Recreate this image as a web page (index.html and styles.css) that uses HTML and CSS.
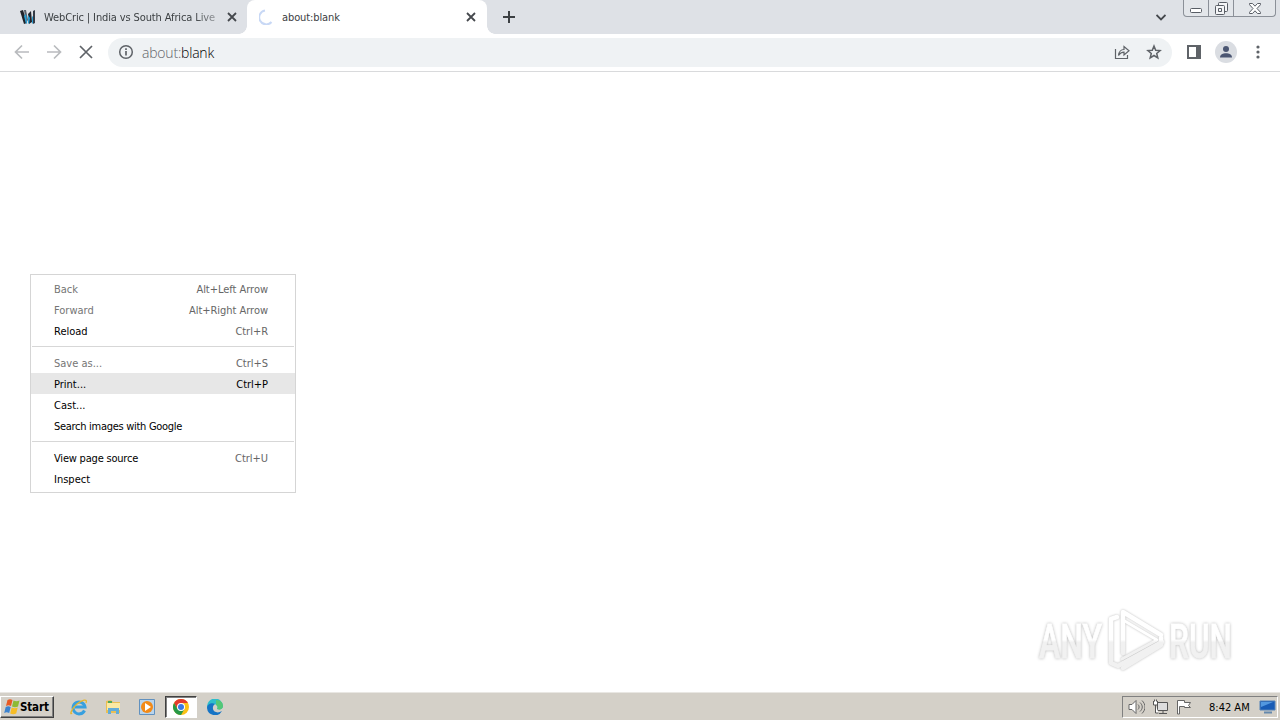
FILE: index.html
```
<!DOCTYPE html>
<html lang="en">

<head>
	<meta charset="UTF-8" />
	<title>about:blank</title>
	<link rel="stylesheet" href="styles.css">
</head>

<body>
	<div class="tabstrip">
		<div class="tab">
			<svg class="favicon" width="16" height="16" viewBox="0 0 16 16">
				<path d="M0 2l3-1 4 13-3 1z" fill="#20242b" />
				<path d="M4 1h2l2 10-2 3z" fill="#59616b" />
				<path d="M8 5l3-3 1 11-3 2z" fill="#20242b" />
				<path d="M13 2l2-1v13l-2 1z" fill="#343b46" />
				<path d="M4 7l2-2 1 9-1 1zM8 6l2 3-1 6-1-1zM12 8l1-1v7l-1 1z" fill="#2b9fd3" />
			</svg>
			<span class="title faded">WebCric | India vs South Africa Live</span>
			<svg class="close" width="10" height="10" viewBox="0 0 10 10"><path d="M1 1l8 8M9 1l-8 8" /></svg>
		</div>
		<div class="tab active">
			<svg class="favicon" width="16" height="16" viewBox="0 0 16 16"><path d="M6 1.500a7 7 0 1 0 6.500 11.500" fill="none" stroke="#c8d8f5" stroke-width="2" /></svg>
			<span class="title blank-title">about:blank</span>
			<svg class="close" width="10" height="10" viewBox="0 0 10 10"><path d="M1 1l8 8M9 1l-8 8" /></svg>
		</div>
		<svg class="new-tab" width="12" height="12" viewBox="0 0 12 12"><path d="M6 0v12M0 6h12" stroke="#3c4043" stroke-width="2" /></svg>
		<svg class="chevron" width="10" height="7" viewBox="0 0 10 7"><path d="M.5 1L5 5.500 9.500 1" fill="none" stroke="#45484d" stroke-width="1.800" /></svg>
		<div class="window-buttons">
			<span class="min"><svg width="12" height="5" viewBox="0 0 12 5"><rect x=".5" y=".5" width="11" height="4" rx="1" fill="#fff" stroke="#585d65" /></svg></span>
			<span class="max"><svg width="13" height="13" viewBox="0 0 13 13" fill="#f4f5f7" stroke="#585d65"><rect x="3.500" y=".5" width="9" height="9" rx="1" /><rect x=".5" y="3.500" width="9" height="9" rx="1" /><path d="M3.500 6.500h3v3h-3z" /></svg></span>
			<span class="exit"><svg width="12" height="11" viewBox="0 0 12 11"><path d="M.5.5h3L6 3.200 8.500.5h3v1.200L8 5.500l3.500 3.800v1.200h-3L6 7.800 3.500 10.500h-3V9.300L4 5.500.5 1.700z" fill="#fff" stroke="#585d65" /></svg></span>
		</div>
	</div>

	<div class="toolbar">
		<svg class="nav" width="16" height="16" viewBox="0 0 16 16" stroke="#b9bbbe"><path d="M15 8H2M8 1.500L1.500 8 8 14.500" /></svg>
		<svg class="nav" width="16" height="16" viewBox="0 0 16 16" stroke="#b9bbbe"><path d="M1 8h13M8 1.500L14.500 8 8 14.500" /></svg>
		<svg class="nav" width="16" height="16" viewBox="0 0 16 16" stroke="#5f6368"><path d="M2 2l12 12M14 2L2 14" /></svg>
		<div class="omnibox">
			<svg width="16" height="16" viewBox="0 0 16 16"><circle cx="8" cy="8" r="6.300" fill="none" stroke="#5f6368" stroke-width="1.500" /><path d="M8 7v4.500M8 4.300v1.700" stroke="#5f6368" stroke-width="1.700" /></svg>
			<span class="url"><span>about:</span>blank</span>
			<svg class="share" width="16" height="16" viewBox="0 0 16 16" fill="none" stroke="#5f6368" stroke-width="1.200"><path d="M1.500 5v9.500h12V11" /><path d="M4.500 11.500C5 7.500 7 5.500 10 5.500V2.500l5 4.300-5 4.200V8.200c-2.500 0-4 .8-5.500 3.300z" /></svg>
			<svg class="star" width="16" height="16" viewBox="0 0 16 16"><path d="M8 2l1.700 4.200 4.400.4-3.400 2.900 1.100 4.400L8 11.500l-3.800 2.400 1.100-4.400-3.400-2.900 4.400-.4z" fill="none" stroke="#5f6368" stroke-width="1.500" /></svg>
		</div>
		<svg class="panel" width="14" height="14" viewBox="0 0 14 14"><path d="M1 1h12v12H1z" fill="#fff" stroke="#5f6368" stroke-width="2" /><path d="M9 1h4v12H9z" fill="#5f6368" /></svg>
		<svg class="avatar" width="22" height="22" viewBox="0 0 22 22"><circle cx="11" cy="11" r="11" fill="#dadde2" /><circle cx="11" cy="8" r="3" fill="#4b5672" /><path d="M5 16.500c0-3 3-4.300 6-4.300s6 1.300 6 4.300z" fill="#4b5672" /></svg>
		<svg class="more" width="4" height="14" viewBox="0 0 4 14" fill="#5f6368"><circle cx="2" cy="2" r="1.600" /><circle cx="2" cy="7" r="1.600" /><circle cx="2" cy="12" r="1.600" /></svg>
	</div>

	<div class="page">
		<div class="context-menu">
			<div class="item disabled"><span>Back</span><kbd>Alt+Left Arrow</kbd></div>
			<div class="item disabled"><span>Forward</span><kbd>Alt+Right Arrow</kbd></div>
			<div class="item"><span>Reload</span><kbd>Ctrl+R</kbd></div>
			<hr />
			<div class="item disabled"><span>Save as...</span><kbd>Ctrl+S</kbd></div>
			<div class="item hover"><span>Print...</span><kbd>Ctrl+P</kbd></div>
			<div class="item"><span>Cast...</span></div>
			<div class="item"><span class="tight">Search images with Google</span></div>
			<hr />
			<div class="item"><span class="source">View page source</span><kbd>Ctrl+U</kbd></div>
			<div class="item"><span>Inspect</span></div>
		</div>

		<svg class="watermark" width="200" height="68" viewBox="0 0 200 68">
			<defs>
				<linearGradient id="fade" gradientUnits="userSpaceOnUse" x1="0" y1="0" x2="0" y2="68">
					<stop offset=".48" stop-color="#fff" />
					<stop offset=".52" stop-color="#f1f1f1" />
				</linearGradient>
			</defs>
			<g class="watermark-text" fill="url(#fade)" stroke="url(#fade)" stroke-width=".8">
				<text x="2" y="51" textLength="63" lengthAdjust="spacingAndGlyphs">ANY</text>
				<text x="132" y="51" textLength="63" lengthAdjust="spacingAndGlyphs">RUN</text>
			</g>
			<g class="watermark-logo" fill="none" stroke="url(#fade)" stroke-width="4.500" stroke-linecap="round" stroke-linejoin="round">
				<path d="M80 10l-6 2v44l7 3 44-24" />
				<path d="M86 46V5l38 23" />
				<path d="M86 13l34 20-35 19" stroke-width="3" />
				<path d="M86 61l38-23v-7" />
			</g>
		</svg>
	</div>

	<div class="taskbar">
		<div class="start">
			<svg width="16" height="16" viewBox="0 0 16 16"><path d="M3.500 1c2-1 3-1 5 0L7 7c-2-1-3-1-5 0z" fill="#e85a24" /><path d="M9.500 1.500c2 1 4 1 6 0L14 7.500c-2 1-4 1-6 0z" fill="#8dba35" /><path d="M1.700 8c2-1 3-1 5 0L5.200 14c-2-1-3-1-5 0z" fill="#3c83cf" /><path d="M7.700 8.500c2 1 4 1 6 0L12.200 14.500c-2 1-4 1-6 0z" fill="#f7bd26" /></svg>
			<span>Start</span>
		</div>
		<div class="task">
			<svg width="18" height="18" viewBox="0 0 18 18" fill="none"><path d="M14.500 12.500A6 6 0 1 1 15 9H5" stroke="#38a0df" stroke-width="3" /><path d="M2 15c-3 3 0-5 5-9s11-6 9-1" stroke="#e6b62d" stroke-width="1.300" /></svg>
		</div>
		<div class="task">
			<svg width="17" height="16" viewBox="0 0 17 16"><path d="M1 2l5-1 2 2h7v11H1z" fill="#e9bf54" /><path d="M2 4h13v7H2z" fill="#fae9a3" /><path d="M3 15V9h11v6h-3v-3H6v3z" fill="#62acd8" /><path d="M3 3h4" stroke="#4ea75c" stroke-width="2" /></svg>
		</div>
		<div class="task">
			<svg width="16" height="16" viewBox="0 0 16 16"><path d="M.5.5h15v15H.5z" fill="#b9d4ec" stroke="#6191bf" /><circle cx="8" cy="8" r="6" fill="#f28a18" /><path d="M6 4l6 4-6 4z" fill="#fff" /></svg>
		</div>
		<div class="task pressed">
			<svg width="16" height="16" viewBox="0 0 16 16"><circle cx="8" cy="8" r="8" fill="#fbc116" /><path d="M1.070 4A8 8 0 0 1 14.930 4H8L4.500 10z" fill="#e33b2e" /><path d="M1.070 4A8 8 0 0 0 8 16l3.500-6-7 0z" fill="#279847" /><circle cx="8" cy="8" r="4" fill="#fff" /><circle cx="8" cy="8" r="3" fill="#3979e4" /></svg>
		</div>
		<div class="task">
			<svg width="17" height="16" viewBox="0 0 17 16"><path d="M0 8a8 8 0 0 1 16-1c0 3-3 4-6 3 2-4-2-6-5-4z" fill="#2fbecb" /><path d="M9 1c5 0 7 3 7 6s-3 4-6 3c1-1 1-3-1-4z" fill="#54c776" /><path d="M0 9c0-4 5-6 8-4-3 2-3 7 1 8 2 1 4 0 6-1a8 8 0 0 1-15-3z" fill="#1674c5" /></svg>
		</div>
		<div class="tray">
			<svg width="17" height="16" viewBox="0 0 17 16" fill="none" stroke="#666"><path d="M1 5.500h3l4-4v13l-4-4H1z" fill="#fff" /><path d="M10 5.500c1.500 1.500 1.500 3.500 0 5M12 3.500c3 3 3 6 0 9M14 1.500c4 4 4 9 0 13" /></svg>
			<svg width="17" height="16" viewBox="0 0 17 16" fill="none" stroke="#555"><path d="M5.500 3.500h10v8h-10z" fill="#ddd" /><path d="M7 14.500h8M11 12v2" /><path d="M1.500 2v4h4V2M2.500.5v2M4.500.5v2M3.500 6v8h3" fill="#fff" /></svg>
			<svg width="16" height="16" viewBox="0 0 16 16" fill="#fff" stroke="#666"><path d="M1.500 15V1.500h7v2h6l-2 3 2 2h-6v-1h-5V15z" /></svg>
			<span class="clock">8:42 AM</span>
			<svg class="screen" width="17" height="14" viewBox="0 0 17 14"><path d="M1 1h15v9H1z" fill="#185bb5" stroke="#5382b8" /><path d="M2 2h12L2 7z" fill="#5297df" /><path d="M5 12.500h8" stroke="#6589ad" stroke-width="2" /></svg>
		</div>
	</div>
</body>

</html>
```
FILE: styles.css
```
* {
	box-sizing: border-box;
}

body {
	margin: 0;
	width: 1280px;
	height: 720px;
	display: flex;
	flex-direction: column;
	overflow: hidden;
	background: #fff;
	font-family: "DejaVu Sans Condensed", "DejaVu Sans", sans-serif;
	font-stretch: condensed;
	font-size: 11px;
	color: #000;
}

svg {
	display: block;
	flex: none;
}

.tabstrip {
	display: flex;
	align-items: center;
	height: 34px;
	background: #dee1e6;
	flex: none;
}

.tab {
	display: flex;
	align-items: center;
	width: 247px;
	height: 34px;
	padding: 0 10px 0 20px;
	color: #3c4043;
}

.tab.active {
	position: relative;
	width: 240px;
	padding: 0 11px 0 12px;
	background: #fff;
	border-radius: 8px 8px 0 0;
}

/* curved feet on both sides of the selected tab */
.tab.active::before,
.tab.active::after {
	content: "";
	position: absolute;
	bottom: 0;
	width: 8px;
	height: 8px;
}

.tab.active::before {
	left: -8px;
	background: radial-gradient(circle at 0 0, #dee1e6 7.5px, #fff 8px);
}

.tab.active::after {
	right: -8px;
	background: radial-gradient(circle at 100% 0, #dee1e6 7.5px, #fff 8px);
}

.title {
	margin-left: 8px;
	white-space: nowrap;
	letter-spacing: -0.12px;
}

.faded {
	width: 173px;
	overflow: hidden;
	-webkit-mask-image: linear-gradient(to right, #000 150px, rgba(0, 0, 0, 0.4) 173px);
}

.blank-title {
	margin-left: 7px;
	letter-spacing: -0.1px;
}

.close {
	margin-left: auto;
	stroke: #45484d;
	stroke-width: 1.8;
}

.new-tab {
	margin-left: 16px;
}

.chevron {
	margin-left: auto;
	margin-right: 17px;
}

.window-buttons {
	display: flex;
	align-self: flex-start;
	width: 93px;
	height: 17px;
	margin-right: 4px;
	border: 1px solid #8b9098;
	border-top: 0;
	border-radius: 0 0 4px 4px;
	background: #e3e6ea;
}

.window-buttons span {
	display: flex;
	justify-content: center;
	align-items: center;
	width: 25px;
	border-right: 1px solid #8b9098;
}

.window-buttons .min {
	padding-top: 5px;
}

.window-buttons .exit {
	width: 41px;
	border: 0;
}

.toolbar {
	display: flex;
	align-items: center;
	height: 38px;
	padding: 0 20px 1px 14px;
	border-bottom: 1px solid #d9dadc;
	flex: none;
}

.nav {
	margin-right: 16px;
	fill: none;
	stroke-width: 1.7;
}

.omnibox {
	display: flex;
	align-items: center;
	width: 1064px;
	height: 29px;
	margin-left: -2px;
	padding: 0 10px;
	border-radius: 15px;
	background: #eff2f4;
}

.url {
	margin-left: 8px;
	font-family: "Open Sans", sans-serif;
	font-size: 14px;
	font-weight: 300;
	font-stretch: normal;
	letter-spacing: -0.2px;
}

.url span {
	color: #5f6368;
}

.share {
	margin-left: auto;
}

.star {
	margin-left: 16px;
}

.panel {
	margin-left: 15px;
}

.avatar {
	margin-left: 14px;
}

.more {
	margin-left: auto;
}

.page {
	position: relative;
	flex: 1;
}

.context-menu {
	position: absolute;
	left: 30px;
	top: 202px;
	width: 266px;
	height: 219px;
	padding: 3px 0;
	border: 1px solid #d5d5d5;
	background: #fff;
}

.item {
	display: flex;
	justify-content: space-between;
	height: 21px;
	padding: 0 27px 0 23px;
	line-height: 23px;
}

.item kbd {
	font-family: inherit;
	letter-spacing: -0.03px;
	color: #666;
}

.item .tight {
	letter-spacing: -0.29px;
}

.item .source {
	letter-spacing: -0.2px;
}

.disabled {
	color: #757575;
}

.hover {
	background: #e7e7e7;
}

.item.hover kbd {
	color: #000;
}

.context-menu hr {
	height: 1px;
	margin: 5px 1px;
	border: 0;
	background: #d7d7d7;
}

.watermark {
	position: absolute;
	left: 1037px;
	top: 535px;
	overflow: visible;
}

.watermark-text {
	font-family: Roboto, sans-serif;
	font-size: 49px;
	font-weight: 500;
	font-stretch: normal;
	filter: drop-shadow(0 0 1.5px #b8b8b8);
}

.watermark-logo {
	filter: drop-shadow(0 0 1.2px #bcbcbc);
}

.taskbar {
	display: flex;
	align-items: center;
	height: 28px;
	padding: 1px 2px 0 0;
	border-top: 1px solid #e9e7e3;
	background: #d4d0c8;
	flex: none;
}

.start {
	display: flex;
	align-items: center;
	width: 54px;
	height: 22px;
	margin-right: 9px;
	padding-left: 3px;
	border: 1px solid;
	border-color: #fff #404040 #404040 #fff;
	box-shadow: inset -1px -1px #808080;
	font-weight: bold;
	font-size: 11.5px;
	letter-spacing: -0.15px;
}

.task {
	display: flex;
	align-items: center;
	justify-content: center;
	width: 32px;
	height: 22px;
	margin-right: 2px;
}

.pressed {
	border: 1px solid;
	border-color: #404040 #fff #fff #404040;
	box-shadow: inset 1px 1px #808080;
	background: #fff;
}

.tray {
	display: flex;
	align-items: center;
	width: 156px;
	height: 22px;
	margin-left: auto;
	padding-left: 5px;
	border: 1px solid;
	border-color: #808080 #fff #fff #808080;
}

.tray svg {
	margin-right: 7px;
}

.clock {
	width: 42px;
	margin-left: 10px;
	white-space: nowrap;
}

.tray .screen {
	margin: 0 0 0 8px;
}
```
